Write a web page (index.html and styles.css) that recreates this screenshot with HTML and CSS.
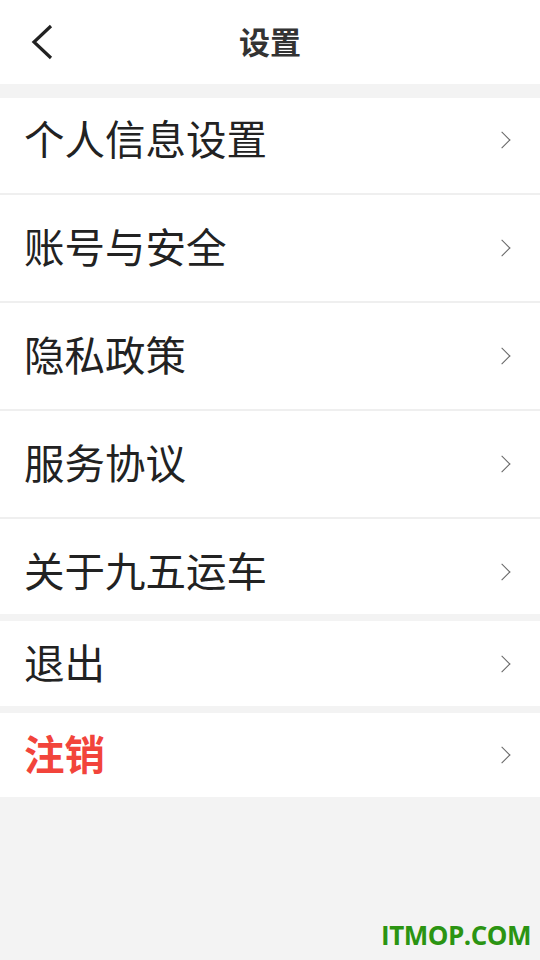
FILE: index.html
```html
<!DOCTYPE html>
<html lang="zh-CN">
<head>
  <meta charset="UTF-8">
  <title>设置</title>
  <link rel="stylesheet" href="styles.css">
</head>
<body>
  <div class="header">
    <svg class="back" width="24" height="36" viewBox="0 0 24 36">
      <path d="M20 2 L3 18 L20 34" fill="none" stroke="#222" stroke-width="3.2"/>
    </svg>
    <div class="title">设置</div>
  </div>

  <div class="group first">
    <div class="row top"><span>个人信息设置</span><i class="arrow"></i></div>
    <div class="row"><span>账号与安全</span><i class="arrow"></i></div>
    <div class="row"><span>隐私政策</span><i class="arrow"></i></div>
    <div class="row"><span>服务协议</span><i class="arrow"></i></div>
    <div class="row bottom"><span>关于九五运车</span><i class="arrow"></i></div>
  </div>

  <div class="group">
    <div class="row single"><span>退出</span><i class="arrow"></i></div>
  </div>

  <div class="group">
    <div class="row single danger"><span>注销</span><i class="arrow"></i></div>
  </div>

  <div class="watermark">ITMOP.COM</div>
</body>
</html>
```

FILE: styles.css
```css
body {
  margin: 0;
  height: 960px;
  background-color: #f3f3f3;
  font-family: "Noto Sans CJK SC", "Noto Sans", sans-serif;
  color: #222222;
  position: relative;
  overflow: hidden;
}
.header {
  height: 84px;
  background-color: #ffffff;
  display: flex;
  align-items: center;
  justify-content: center;
  position: relative;
}
.back {
  position: absolute;
  left: 31px;
  top: 24px;
}
.title {
  font-size: 31px;
  font-weight: bold;
  color: #333333;
  margin-top: -3px;
}
.group {
  background-color: #ffffff;
  margin-top: 7px;
}
.group.first {
  margin-top: 14px;
}
.row {
  height: 106px;
  display: flex;
  align-items: center;
  justify-content: space-between;
  padding: 0 28px 0 24px;
  font-size: 40.5px;
  border-bottom: 2px solid #efefef;
  box-sizing: content-box;
}
.row.top {
  height: 84px;
  padding-bottom: 11px;
}
.row.bottom {
  height: 84px;
  padding-top: 11px;
  border-bottom: none;
}
.row.single {
  height: 85px;
  border-bottom: none;
}
.row.danger {
  height: 84px;
  color: #f2443b;
  font-weight: bold;
}
.row span {
  margin-top: -5px;
}
.arrow {
  width: 11px;
  height: 11px;
  border-top: 1.8px solid #666666;
  border-right: 1.8px solid #666666;
  transform: rotate(45deg);
  margin-right: 4px;
}
.watermark {
  position: absolute;
  right: 9px;
  bottom: 7px;
  font-family: "Open Sans", sans-serif;
  font-weight: bold;
  font-size: 26px;
  color: #2b9412;
  letter-spacing: -0.5px;
}
```
